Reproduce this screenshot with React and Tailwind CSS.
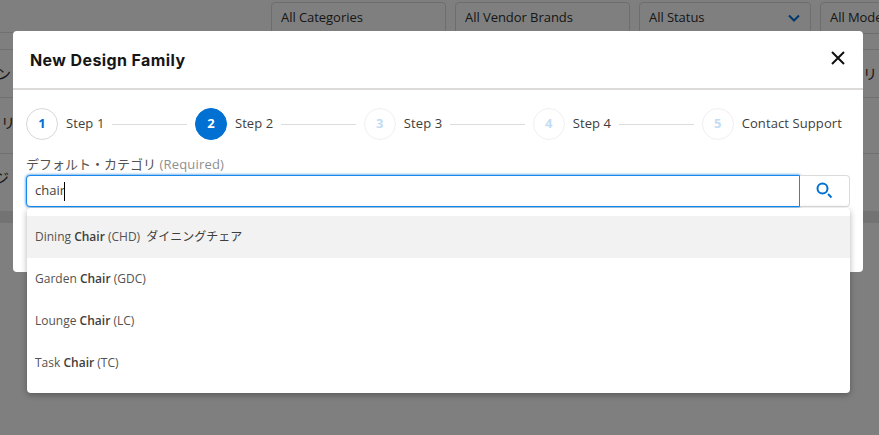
import React from "react";

function Step({ n, label, state }) {
  const circle =
    state === "active"
      ? "bg-[#0070d2] border-[#0070d2] text-white"
      : state === "done"
      ? "bg-white border-[#d8d8d8] text-[#0070d2]"
      : "bg-white border-[#f0f0f0] text-[#c3dcf3]";
  return (
    <div className="flex items-center shrink-0">
      <div className={`w-8 h-8 rounded-full border flex items-center justify-center text-[13px] font-bold ${circle}`}>{n}</div>
      <span className="ml-2 text-[13px] text-[#3e3e3c] tracking-[0.1px]">{label}</span>
    </div>
  );
}

function Line() {
  return <div className="flex-1 h-px bg-[#dcdcdc] mx-2" />;
}

function Option({ pre, post, jp, active }) {
  return (
    <div className={`h-[42px] flex items-center pl-2 text-[12px] text-[#54524f] ${active ? "bg-[#f2f2f2]" : ""}`}>
      <span>
        {pre} <b className="font-semibold text-[#3e3e3c]">Chair</b> {post}
        {jp ? <span className="ml-[3px] text-[#3e3e3c]"> {jp}</span> : null}
      </span>
    </div>
  );
}

function Filter({ w, label, chevron }) {
  return (
    <div className={`${w} shrink-0 h-[32px] rounded border border-[#dddbda] bg-white flex items-center justify-between pl-[9px] pr-[9px] text-[13px] tracking-[-0.05px] text-[#2e2e2c]`}>
      <span>{label}</span>
      {chevron ? (
        <svg width="14" height="14" viewBox="0 0 14 14" fill="none">
          <path d="M2 4.5 L7 9.5 L12 4.5" stroke="#0070d2" strokeWidth="2" />
        </svg>
      ) : null}
    </div>
  );
}

export default function App() {
  return (
    <div className="relative w-[879px] h-[435px] overflow-hidden bg-white font-['Open_Sans','Noto_Sans_CJK_JP',sans-serif]">
      {/* page behind the overlay */}
      <div className="h-[50px] border-b border-[#e0e0e0]">
        <div className="h-[33px] border-b border-[#e0e0e0] pt-[2px] pl-[271px] flex gap-[9px]">
          <Filter w="w-[175px]" label="All Categories" />
          <Filter w="w-[175px]" label="All Vendor Brands" />
          <Filter w="w-[172px]" label="All Status" chevron />
          <Filter w="w-[172px]" label="All Models" />
        </div>
      </div>
      <div className="h-[48px] border-b border-[#e0e0e0] flex items-center justify-between text-[14px] text-[#2b2b2b] font-['Noto_Sans_CJK_JP',sans-serif]">
        <span className="-ml-[3px]">ン</span>
        <span className="mr-[2px]">テリ</span>
      </div>
      <div className="h-[56px] border-b border-[#e0e0e0] flex items-center text-[14px] text-[#2b2b2b] font-['Noto_Sans_CJK_JP',sans-serif]">
        <span className="ml-px -mt-[6px]">リ</span>
      </div>
      <div className="h-[57px] flex items-center text-[14px] text-[#2b2b2b] font-['Noto_Sans_CJK_JP',sans-serif]">
        <span className="-ml-[5px] -mt-[10px]">ジ</span>
      </div>
      <div className="h-[12px] bg-[#e6e6e6]" />

      {/* overlay */}
      <div className="absolute inset-0 bg-black/50" />

      {/* modal */}
      <div className="absolute left-[13px] top-[31px] w-[850px] h-[241px] bg-white rounded">
        <div className="h-[59px] border-b-2 border-[#dddbda] flex items-center justify-between pl-[17px] pr-[17px]">
          <h1 className="text-[16px] font-bold tracking-[0.4px] text-[#161616] font-['Inter',sans-serif] mt-[1px]">New Design Family</h1>
          <svg width="16" height="16" viewBox="0 0 16 16" fill="none" className="-mt-[4px]">
            <path d="M2 2 L14 14 M14 2 L2 14" stroke="#111" strokeWidth="2" />
          </svg>
        </div>
        <div className="px-[13px]">
          <div className="flex items-center mt-[18px] w-[816px]">
            <Step n="1" label="Step 1" state="done" />
            <Line />
            <Step n="2" label="Step 2" state="active" />
            <Line />
            <Step n="3" label="Step 3" />
            <Line />
            <Step n="4" label="Step 4" />
            <Line />
            <Step n="5" label="Contact Support" />
          </div>
          <div className="mt-[14px] mb-px h-[20px] text-[13px] leading-[20px] text-[#54524f]">
            デフォルト・カテゴリ <span className="text-[#8f8f8f] tracking-[0.2px]">(Required)</span>
          </div>
          <div className="relative">
            <div className="flex h-[32px] w-[824px]">
              <div className="flex-1 border border-[#1589ee] rounded-l shadow-[0_0_3px_#0070d2] bg-white flex items-center pl-2 text-[13px] text-[#3e3e3c]">
                <span>chai</span>
                <span className="relative">r<span className="absolute right-0 top-[1px] bottom-0 w-px bg-black" /></span>
              </div>
              <div className="w-[50px] border border-l-0 border-[#dddbda] rounded-r flex items-center justify-center bg-white">
                <svg width="18" height="18" viewBox="0 0 18 18" fill="none" className="-mt-[2px] -ml-px">
                  <circle cx="7.5" cy="7.5" r="5" stroke="#0070d2" strokeWidth="2" />
                  <path d="M13 13 L16.5 16.5" stroke="#0070d2" strokeWidth="2" />
                </svg>
              </div>
            </div>
            <div className="absolute left-px top-[33px] w-[823px] h-[185px] py-2 bg-white rounded shadow-[0_2px_6px_rgba(0,0,0,0.3)]">
              <Option pre="Dining" post="(CHD)" jp="ダイニングチェア" active />
              <Option pre="Garden" post="(GDC)" />
              <Option pre="Lounge" post="(LC)" />
              <Option pre="Task" post="(TC)" />
            </div>
          </div>
        </div>
      </div>
    </div>
  );
}
